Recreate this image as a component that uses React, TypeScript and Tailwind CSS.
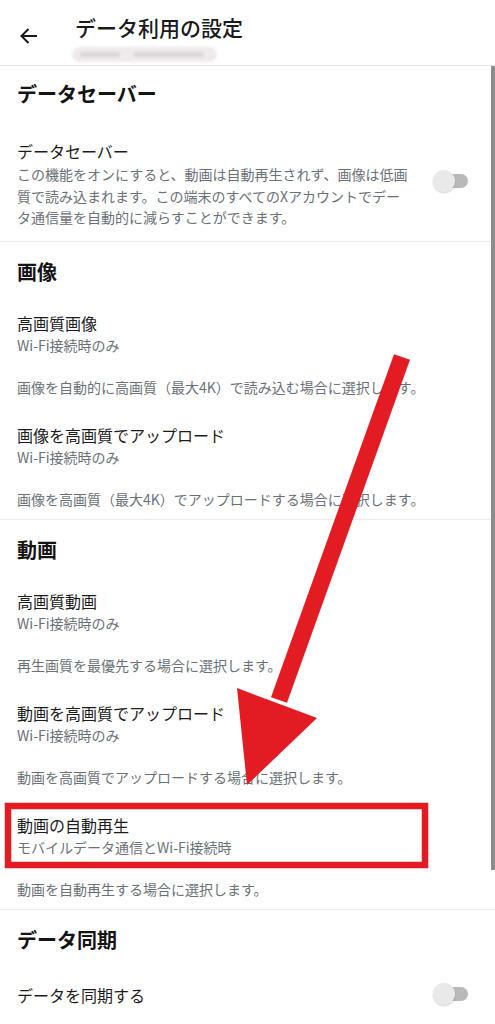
import React from "react";

type Item = { title: string; sub?: string; desc: string };

const imageItems: Item[] = [
  { title: "高画質画像", sub: "Wi-Fi接続時のみ", desc: "画像を自動的に高画質（最大4K）で読み込む場合に選択します。" },
  { title: "画像を高画質でアップロード", sub: "Wi-Fi接続時のみ", desc: "画像を高画質（最大4K）でアップロードする場合に選択します。" },
];

const videoItems: Item[] = [
  { title: "高画質動画", sub: "Wi-Fi接続時のみ", desc: "再生画質を最優先する場合に選択します。" },
  { title: "動画を高画質でアップロード", sub: "Wi-Fi接続時のみ", desc: "動画を高画質でアップロードする場合に選択します。" },
  { title: "動画の自動再生", sub: "モバイルデータ通信とWi-Fi接続時", desc: "動画を自動再生する場合に選択します。" },
];

function Toggle() {
  return (
    <div className="relative w-[35px] h-[22px] flex items-center justify-end shrink-0">
      <div className="w-[30px] h-[14px] rounded-full bg-[#b9b9b9]" />
      {/* knob */}
      <div className="absolute left-0 top-0 w-[22px] h-[22px] rounded-full bg-[#e9e9e9] shadow-[0_1px_2px_rgba(0,0,0,0.18)]" />
    </div>
  );
}

function SettingItem({ item }: { item: Item }) {
  return (
    <div className="pt-[26px] px-[17px]">
      <div className="text-[16px] leading-[22px] text-[#1c1c1c]">{item.title}</div>
      {item.sub && <div className="text-[14px] leading-[22px] text-[#6a7178]">{item.sub}</div>}
      <div className="mt-[20px] text-[14px] leading-[22px] text-[#6a7178]">{item.desc}</div>
    </div>
  );
}

function SectionHeading({ children }: { children: React.ReactNode }) {
  return <h2 className="px-[17px] text-[20px] leading-[28px] font-bold text-[#141414]">{children}</h2>;
}

export default function App() {
  return (
    <div className="relative w-full h-[1024px] overflow-hidden bg-white font-['Noto_Sans_CJK_JP','Noto_Sans',sans-serif]">
      {/* Header */}
      <div className="h-[66px] border-b border-[#eee4e6] flex items-start">
        <div className="ml-[19px] mt-[27px] w-[19px] h-[18px]">
          <svg width="19" height="18" viewBox="0 0 19 18" fill="none" stroke="#1a1a1a" strokeWidth="2">
            <path d="M18 9H2.5" />
            <path d="M9.5 2L2.5 9l7 7" />
          </svg>
        </div>
        <div className="ml-[37px] pt-[13px]">
          <h1 className="text-[21px] leading-[28px] font-medium text-[#1a1a1a]">データ利用の設定</h1>
          {/* blurred account name */}
          <div className="mt-[6px] -ml-[3px] w-[145px] h-[15px] rounded-full bg-[#efeaeb] blur-[1.5px] flex items-center gap-[14px] px-[8px]">
            <div className="w-[40px] h-[5px] rounded-full bg-[#d9d6d7]" />
            <div className="w-[70px] h-[5px] rounded-full bg-[#d9d6d7]" />
          </div>
        </div>
      </div>

      {/* データセーバー */}
      <section className="pt-[14px] pb-[12px] border-b border-[#ebebeb]">
        <SectionHeading>データセーバー</SectionHeading>
        <div className="pt-[32px] pl-[17px] pr-[27px] flex items-center">
          <div className="w-[396px] mr-[20px]">
            <div className="text-[16px] leading-[22px] text-[#1c1c1c]">データセーバー</div>
            <p className="mt-[2px] text-[14px] leading-[21.5px] text-[#6a7178]">
              この機能をオンにすると、動画は自動再生されず、画像は低画質で読み込まれます。この端末のすべてのXアカウントでデータ通信量を自動的に減らすことができます。
            </p>
          </div>
          <div className="mb-[6px]">
            <Toggle />
          </div>
        </div>
      </section>

      {/* 画像 */}
      <section className="pt-[16px] pb-[9px] border-b border-[#ebebeb]">
        <SectionHeading>画像</SectionHeading>
        {imageItems.map((item) => (
          <SettingItem key={item.title} item={item} />
        ))}
      </section>

      {/* 動画 */}
      <section className="pt-[16px] pb-[9px] border-b border-[#ebebeb]">
        <SectionHeading>動画</SectionHeading>
        {videoItems.map((item) => (
          <SettingItem key={item.title} item={item} />
        ))}
      </section>

      {/* データ同期 */}
      <section className="pt-[16px]">
        <SectionHeading>データ同期</SectionHeading>
        <div className="pt-[30px] pl-[17px] pr-[27px] flex items-center justify-between">
          <div className="text-[16px] leading-[22px] text-[#1c1c1c]">データを同期する</div>
          <div className="mt-[-2px]">
            <Toggle />
          </div>
        </div>
      </section>

      {/* scrollbar thumb */}
      <div className="absolute right-0 top-[66px] w-[4px] h-[804px] bg-[#8c8c8c]" />

      {/* annotation overlay */}
      <svg className="absolute left-0 top-0 pointer-events-none" width="495" height="1024" viewBox="0 0 495 1024">
        <line x1="402" y1="357" x2="279" y2="700" stroke="#e31c23" strokeWidth="17" />
        <polygon points="237,688 317,718 247,785" fill="#e31c23" />
        <rect x="8" y="806" width="417" height="59" fill="none" stroke="#e31c23" strokeWidth="6.5" />
      </svg>
    </div>
  );
}
